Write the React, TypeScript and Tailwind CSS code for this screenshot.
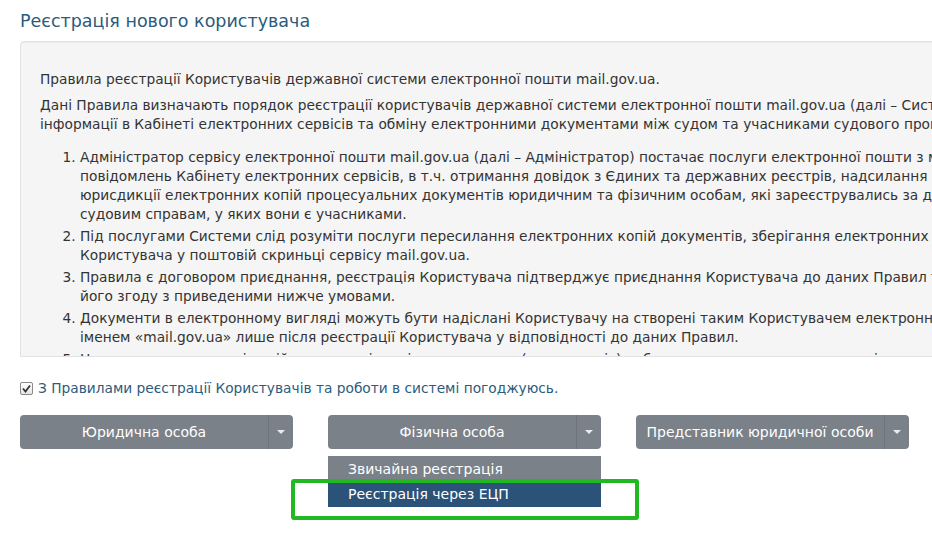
import React from "react";

const rules: { lines: string[] }[] = [
  {
    lines: [
      "Адміністратор сервісу електронної пошти mail.gov.ua (далі – Адміністратор) постачає послуги електронної пошти з метою отримання",
      "повідомлень Кабінету електронних сервісів, в т.ч. отримання довідок з Єдиних та державних реєстрів, надсилання судами усіх",
      "юрисдикції електронних копій процесуальних документів юридичним та фізичним особам, які зареєструвались за даними Правилами, по",
      "судовим справам, у яких вони є учасниками.",
    ],
  },
  {
    lines: [
      "Під послугами Системи слід розуміти послуги пересилання електронних копій документів, зберігання електронних повідомлень",
      "Користувача у поштовій скриньці сервісу mail.gov.ua.",
    ],
  },
  {
    lines: [
      "Правила є договором приєднання, реєстрація Користувача підтверджує приєднання Користувача до даних Правил та означає",
      "його згоду з приведеними нижче умовами.",
    ],
  },
  {
    lines: [
      "Документи в електронному вигляді можуть бути надіслані Користувачу на створені таким Користувачем електронні поштові скриньки з доменним",
      "іменем «mail.gov.ua» лише після реєстрації Користувача у відповідності до даних Правил.",
    ],
  },
  {
    lines: [
      "Надсилання документів здійснюється відповідно до правил (регламентів) роботи з кожним типом документів, за умови наявності",
    ],
  },
];

function Caret() {
  return (
    <svg width="8" height="4" viewBox="0 0 8 4" className="block">
      <path d="M0 0 L8 0 L4 4 Z" fill="#e9ecef" />
    </svg>
  );
}

function SplitButton({ label }: { label: string }) {
  return (
    <div className="flex h-[34px] w-[273px] rounded-[4px] bg-[#7a8189] text-white text-[14px]">
      <div className="flex-1 flex items-center justify-center">{label}</div>
      <div className="w-[25px] flex items-center justify-center border-l border-[#6e747c]">
        <Caret />
      </div>
    </div>
  );
}

export default function App() {
  return (
    <div
      className="relative w-[932px] h-[547px] overflow-hidden bg-white text-[#333]"
      style={{ fontFamily: '"DejaVu Sans", Verdana, sans-serif' }}
    >
      <div className="pl-[20px] pt-[9px]">
        <h1 className="text-[17.5px] leading-[24px] text-[#2c5b7c]">
          Реєстрація нового користувача
        </h1>

        {/* rules box */}
        <div className="mt-[8px] w-[1200px] h-[316px] overflow-hidden rounded-tl-[4px] border border-[#e3e3e3] bg-[#f5f5f5] shadow-[inset_0_1px_1px_rgba(0,0,0,0.05)] pt-[28px] pl-[19px] text-[13.75px] leading-[19px] whitespace-nowrap">
          <p className="mb-[7px]">
            Правила реєстрації Користувачів державної системи електронної пошти mail.gov.ua.
          </p>
          <p>
            Дані Правила визначають порядок реєстрації користувачів державної системи електронної пошти mail.gov.ua (далі – Система) для отримання
            <br />
            інформації в Кабінеті електронних сервісів та обміну електронними документами між судом та учасниками судового процесу.
          </p>
          <ol className="mt-[14px] pl-[40px] list-decimal">
            {rules.map((r, i) => (
              <li key={i} className="mb-[3px]">
                {r.lines.map((l, j) => (
                  <div key={j}>{l}</div>
                ))}
              </li>
            ))}
          </ol>
        </div>

        {/* agreement */}
        <label className="mt-[22px] flex items-center gap-[5px] text-[13.75px] leading-[19px] text-[#2c5b7c]">
          <span className="relative w-[13px] h-[13px]">
            <input
              type="checkbox"
              defaultChecked
              className="appearance-none block w-[13px] h-[13px] m-0 rounded-[2px] border border-[#8a8a8a] bg-gradient-to-b from-white to-[#e6e6e6]"
            />
            <svg viewBox="0 0 13 13" className="absolute inset-0 w-[13px] h-[13px] pointer-events-none">
              <path d="M3 6.5 L5.5 9.5 L10 3.5" fill="none" stroke="#333" strokeWidth="1.8" />
            </svg>
          </span>
          <span>З Правилами реєстрації Користувачів та роботи в системі погоджуюсь.</span>
        </label>

        <div className="mt-[17px] flex gap-[35px]">
          <SplitButton label="Юридична особа" />
          <div className="relative">
            <SplitButton label="Фізична особа" />
            <div className="absolute left-0 top-[41px] w-[273px] text-white text-[14px]">
              <div className="h-[26px] flex items-center pl-[20px] bg-[#7a8189]">Звичайна реєстрація</div>
              <div className="h-[25px] flex items-center pl-[20px] bg-[#2b5279]">Реєстрація через ЕЦП</div>
            </div>
          </div>
          <SplitButton label="Представник юридичної особи" />
        </div>
      </div>

      {/* highlight annotation */}
      <div className="absolute left-[291px] top-[479px] w-[348px] h-[41px] rounded-[3px] border-[4px] border-[#22b822]" />
    </div>
  );
}
